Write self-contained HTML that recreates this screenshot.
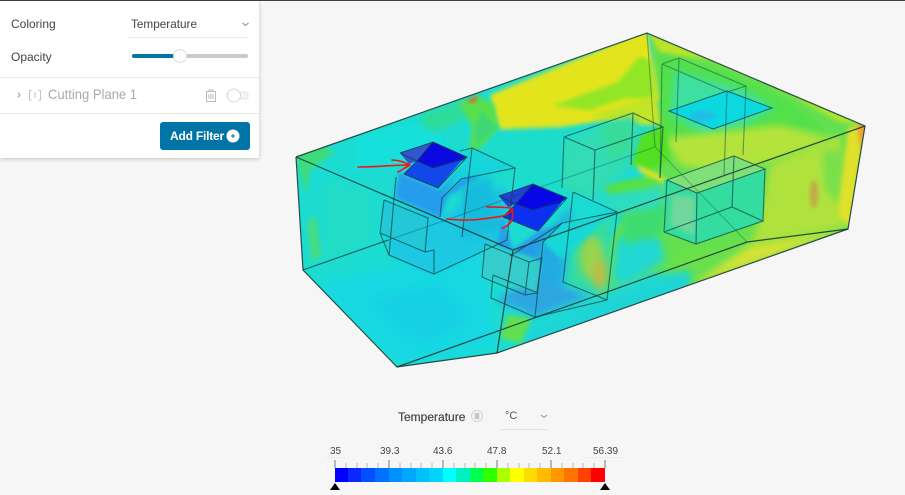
<!DOCTYPE html>
<html><head><meta charset="utf-8">
<style>
html,body{margin:0;padding:0;width:905px;height:495px;overflow:hidden;background:#f6f6f6;font-family:"Liberation Sans",sans-serif}
#wrap{position:relative;width:905px;height:495px;overflow:hidden}
#topbar{position:absolute;left:0;top:0;width:905px;height:1px;background:#3b4148}
#panel{position:absolute;left:0;top:1px;width:259px;height:157px;background:#fff;box-shadow:0 1px 4px rgba(0,0,0,.22)}
.t{position:absolute;white-space:nowrap;line-height:14px}
svg{position:absolute;left:0;top:0}
</style></head><body><div id="wrap">
<svg width="905" height="495" viewBox="0 0 905 495">
<defs>
<clipPath id="c"><polygon points="296,157 647,33 865,126 848,229 497,353 397,367 303,270"/></clipPath>
<filter id="b8" x="-30%" y="-30%" width="160%" height="160%"><feGaussianBlur stdDeviation="8"/></filter>
<filter id="b4" x="-30%" y="-30%" width="160%" height="160%"><feGaussianBlur stdDeviation="4"/></filter>
<filter id="b2" x="-30%" y="-30%" width="160%" height="160%"><feGaussianBlur stdDeviation="2"/></filter>
<filter id="s" x="-5%" y="-5%" width="110%" height="110%"><feGaussianBlur stdDeviation=".35"/></filter>
</defs>
<g clip-path="url(#c)">
<rect x="280" y="20" width="600" height="360" fill="#1cdcd2"/>
<!-- big right area green -->
<polygon points="650,20 880,110 870,240 700,300 590,330 610,240 640,190 660,120" fill="#62e050"/>
<!-- yellow top band -->
<polygon points="490,95 647,30 660,100 620,118 560,128 500,130 495,115" fill="#e4e41e" filter="url(#b2)"/>
<polygon points="552,106 585,94 618,82 640,56 652,62 655,100 625,98 590,110" fill="#92e626" filter="url(#b2)"/>
<polygon points="590,115 655,95 665,125 640,125 610,122" fill="#c4e428" filter="url(#b2)"/>
<polygon points="648,33 865,126 840,122 790,95 720,62 660,52" fill="#bfe328" filter="url(#b2)"/>
<polygon points="660,55 720,70 790,102 826,130 790,130 730,135 660,140" fill="#52e04a" filter="url(#b2)"/>
<polygon points="675,70 745,90 775,108 740,128 705,135 670,115" fill="#3ce0a0" filter="url(#b4)"/>
<polygon points="665,138 780,125 835,140 760,165 720,172 680,165" fill="#b4e43a" filter="url(#b4)"/>
<polygon points="640,135 665,125 670,160 650,170 630,165" fill="#52e020" filter="url(#b2)"/>
<polygon points="636,164 662,176 668,182 660,182 640,172" fill="#e0e028" filter="url(#b2)"/>
<polygon points="600,185 640,178 658,182 650,192 610,196" fill="#58e040" filter="url(#b2)"/>
<!-- right wall -->
<polygon points="770,165 840,135 852,225 750,245 760,220" fill="#b0e23c" filter="url(#b4)"/>
<polygon points="822,150 845,150 842,205 825,190" fill="#78e04c" filter="url(#b4)"/>
<polygon points="848,128 866,124 850,225 838,215" fill="#dfe12c" filter="url(#b2)"/>
<polygon points="857,124 867,124 861,150" fill="#ef9a30" filter="url(#b2)"/>
<ellipse cx="814" cy="194" rx="4" ry="14" fill="#c2a848" filter="url(#b2)"/>
<polygon points="750,245 848,228 760,262 690,285" fill="#d4e234" filter="url(#b4)"/>
<polygon points="680,250 747,242 700,268 650,290" fill="#6ae048" filter="url(#b4)"/>
<!-- centre cyan -->
<polygon points="490,134 560,130 610,128 632,130 628,155 600,178 560,192 520,190 470,165 475,140" fill="#1edccc" filter="url(#b4)"/>
<polygon points="565,140 632,116 640,130 630,165 595,198 562,188" fill="#30dcb4" filter="url(#b4)"/>
<polygon points="600,125 632,120 632,150 610,160" fill="#38dc9a" filter="url(#b4)"/>
<polygon points="596,198 640,190 665,185 662,215 620,215" fill="#2edcc0" filter="url(#b4)"/>
<!-- box 3 tint -->
<polygon points="664,180 765,169 763,221 696,244 664,232" fill="#34dca0"/>
<polygon points="668,180 734,156 765,169 697,193" fill="#80e078"/>
<polygon points="672,195 695,197 695,235 670,225" fill="#70d89c" filter="url(#b2)"/>
<!-- floor below right -->
<polygon points="617,240 640,225 660,240 665,260 625,285 612,280" fill="#22d8d4" filter="url(#b4)"/>
<polygon points="620,215 668,205 662,235 625,245" fill="#3cdc70" filter="url(#b4)"/>
<polygon points="605,290 650,272 690,275 640,300 590,320 570,310" fill="#22d8d0" filter="url(#b4)"/>
<!-- yellow olive between box -->
<polygon points="575,225 612,215 608,298 565,285" fill="#34dca0" filter="url(#b4)"/>
<ellipse cx="592" cy="258" rx="12" ry="22" fill="#98d44c" filter="url(#b4)"/>
<ellipse cx="600" cy="275" rx="7" ry="15" fill="#c0bc44" filter="url(#b4)"/>
<polygon points="508,315 532,318 522,344 500,338" fill="#60e050" filter="url(#b2)"/>
<polygon points="530,330 600,305 690,270 690,290 520,352" fill="#1ed4d8" filter="url(#b4)"/>
<!-- upper-left green tail -->
<polygon points="455,104 478,96 494,104 498,128 480,148 470,150 472,125" fill="#58e04c" filter="url(#b2)"/>
<polygon points="482,110 497,128 476,146 474,130" fill="#3cd874" filter="url(#b2)"/>
<polygon points="466,101 470,99 479,95 474,103" fill="#e65a20" filter="url(#b2)"/>
<polygon points="420,115 458,103 466,118 450,126 425,135" fill="#2edc98" filter="url(#b4)"/>
<!-- left wall -->
<polygon points="296,157 322,145 335,152 310,170 306,195" fill="#3edc78" filter="url(#b2)"/>
<polygon points="307,222 316,215 322,256 311,262" fill="#44dc84" filter="url(#b2)"/>
<polygon points="325,180 372,195 370,240 325,265" fill="#22dcc8" filter="url(#b4)"/>
<polygon points="320,285 480,245 496,345 400,365" fill="#14d8e2" filter="url(#b4)"/>
<polygon points="370,300 440,285 470,320 420,345" fill="#18d0e4" filter="url(#b4)"/>
<polygon points="360,135 420,125 445,142 400,165 350,170" fill="#14e0dc" filter="url(#b4)"/>
<!-- bodies -->
<polygon points="389,205 440,217 470,200 507,185 507,240 434,274 389,255" fill="#1ec8e2" filter="url(#b2)"/>
<polygon points="399,172 440,190 458,172 476,170 480,178 448,196 440,218 395,198" fill="#289cec" filter="url(#b2)"/>
<polygon points="462,186 490,176 504,230 462,238" fill="#14bcdc" filter="url(#b4)"/>
<polygon points="384,200 428,218 425,252 380,233" fill="#22c8d8"/>
<polygon points="513,250 540,230 562,224 545,243 540,262 497,246 503,218" fill="#289cea" filter="url(#b2)"/>
<polygon points="539,245 571,205 564,282 535,316 530,280" fill="#22aae2" filter="url(#b4)"/>
<polygon points="495,300 537,316 590,296 560,285 530,280" fill="#2ea6e0" filter="url(#b4)"/>
<polygon points="485,244 541,261 537,293 482,277" fill="#34cccc" filter="url(#b2)"/>
<polygon points="565,192 617,212 562,223 543,242 562,260 610,215" fill="#18d8d8" filter="url(#b2)"/>
<polygon points="470,150 515,168 461,179 442,198" fill="#14d4dc" filter="url(#b2)"/>
<!-- cyan plane -->
<polygon points="669,111 727,91 772,108 713,129" fill="#0cd8e0"/>
<ellipse cx="703" cy="116" rx="13" ry="5" fill="#20bce6" filter="url(#b2)"/>
</g>
<!-- blue planes -->
<polygon points="400,153 433,142 417,161 409,164" fill="#3256cf"/>
<polygon points="433,142 467,157 457,164 433,168 417,161" fill="#0a0ae0"/>
<polygon points="417,161 433,168 462,160 438,188 404,174" fill="#1248ea"/>
<polygon points="499,196 533,184 516,204 508,207" fill="#2040d8"/>
<polygon points="533,184 567,198 557,205 533,210 516,204" fill="#0606e6"/>
<polygon points="516,204 533,210 562,202 538,231 503,217" fill="#0c30f0"/>
<g filter="url(#s)">
<g fill="none" stroke="#123a4a" stroke-width="1" stroke-opacity=".8">
<path d="M400,153 433,142 467,157 438,188 404,174M400,153 417,161 433,168 467,157M433,142 417,161 404,174"/>
<path d="M499,196 533,184 567,198 538,231 503,217M499,196 516,204 533,210 567,198M533,184 516,204 503,217"/>
</g>
<g fill="none" stroke="#0f3f46" stroke-width="1.1" stroke-opacity=".7">
<path d="M564,137 633,113 663,127 595,150 564,137M564,137 562,188M595,150 593,200M633,113 631,165M663,127 660,178"/>
<path d="M662,64 679,58 746,86 727,92 662,64M662,64 660,178M679,58 676,142M746,86 743,155M727,92 724,175" stroke-opacity=".5"/>
<path d="M669,111 727,91 772,108 713,129Z"/>
<path d="M667,180 734,156 765,169 697,193 667,180M664,232 732,207 763,221 696,244 664,232M667,180 664,232M734,156 732,207M765,169 763,221M697,193 696,244"/>
<path d="M303,270 655,147 747,242" stroke-opacity=".3"/>
<path d="M647,33 655,147" stroke-opacity=".4"/>
<path d="M472,148 515,168 461,179 442,198 440,217M472,148 462,237M515,168 507,240 434,274M472,148 460,151M396,177 389,255 434,274 434,250 425,252"/>
<path d="M384,200 380,233 425,252 428,218 384,200M380,233 389,255"/>
<path d="M573,192 617,212 562,223 543,242 535,317 607,300 617,212M573,192 563,282 607,300M535,317 491,298 493,275"/>
<path d="M485,244 482,277 525,295 529,262 485,244M529,262 542,258 537,293 525,295M493,275 538,293"/>
<path d="M562,223 510,256M303,270 388,240"/>
</g>
<g fill="none" stroke="#1c3a38" stroke-width="1.2" stroke-opacity=".9">
<path d="M296,157 647,33 865,126 848,229 497,353 397,367 303,270 296,157"/>
<path d="M296,157 513,250 865,126M513,250 497,353M397,367 747,242 848,229"/>
</g>
</g>
<!-- red arrows -->
<g fill="none" stroke="#f01414" stroke-width="1.6" stroke-linecap="round" stroke-linejoin="round">
<path d="M358,167C375,167 395,165 410,165M392,160C400,160 406,163 410,165C406,167 402,170 398,172"/>
<path d="M447,219C470,222 490,218 503,216C508,214 511,212 513,209M487,207C496,207 504,207 510,208C514,212 513,218 511,222C508,225 505,228 502,228"/>
</g>
</svg>
<div id="topbar"></div>
<div id="panel"></div>
<svg width="905" height="495" viewBox="0 0 905 495">
<path d="M128,37.5H248M0,77.5H259M0,113.5H259" stroke="#e8e8e8" fill="none"/>
<path d="M242.5,23 245.5,25.5 248.5,23" stroke="#888" fill="none"/>
<rect x="132" y="54" width="116" height="4" rx="2" fill="#cacaca"/>
<rect x="132" y="54" width="48" height="4" rx="2" fill="#0074a6"/>
<circle cx="180" cy="56" r="6.5" fill="#fff" stroke="#dcdcdc"/>
<path d="M18,92.5 20,95 18,97.5" stroke="#aaa" stroke-width="1.2" fill="none"/>
<path d="M31.5,90.5H29.5V100H31.5M38.5,90.5H40.5V100H38.5M35,92V98" stroke="#c2c2c2" fill="none"/>
<path d="M206.5,91.5H215.5V101.5H206.5ZM209,90V91.5H213V90ZM209,94V99M211,94V99M213,94V99" stroke="#bcbcbc" fill="none"/>
<rect x="227" y="92" width="21" height="7" rx="2" fill="#f4f4f4" stroke="#e4e4e4"/>
<circle cx="234" cy="95.5" r="6.5" fill="#fff" stroke="#d8d8d8"/>
<rect x="160" y="122" width="90" height="28" rx="3" fill="#0074a6"/>
<circle cx="233" cy="136" r="6.5" fill="#fff"/>
<path d="M231,136H235M233,134V138" stroke="#0074a6"/>
<circle cx="477" cy="416" r="5.5" fill="#f4f4f4" stroke="#d4d4d4"/>
<path d="M474.7,414H479.3M474.7,416H479.3M474.7,418H479.3" stroke="#777" stroke-width=".8"/>
<path d="M500,429.5H548" stroke="#e2e2e2"/>
<path d="M541,415 544,417.5 547,415" stroke="#999" fill="none"/>
<g shape-rendering="crispEdges">
<rect x="335" y="468" width="13" height="14" fill="#0000ff"/>
<rect x="348" y="468" width="13" height="14" fill="#0a28ff"/>
<rect x="361" y="468" width="14" height="14" fill="#0050ff"/>
<rect x="375" y="468" width="14" height="14" fill="#0070ff"/>
<rect x="389" y="468" width="13" height="14" fill="#0090ff"/>
<rect x="402" y="468" width="14" height="14" fill="#00a8ff"/>
<rect x="416" y="468" width="13" height="14" fill="#00c0ff"/>
<rect x="429" y="468" width="14" height="14" fill="#00d4ff"/>
<rect x="443" y="468" width="13" height="14" fill="#00ffff"/>
<rect x="456" y="468" width="14" height="14" fill="#00f0c0"/>
<rect x="470" y="468" width="13" height="14" fill="#00ff50"/>
<rect x="483" y="468" width="14" height="14" fill="#30ff00"/>
<rect x="497" y="468" width="13" height="14" fill="#aaff00"/>
<rect x="510" y="468" width="14" height="14" fill="#ffff00"/>
<rect x="524" y="468" width="13" height="14" fill="#ffdc00"/>
<rect x="537" y="468" width="14" height="14" fill="#ffbc00"/>
<rect x="551" y="468" width="13" height="14" fill="#ff9800"/>
<rect x="564" y="468" width="14" height="14" fill="#ff7400"/>
<rect x="578" y="468" width="13" height="14" fill="#ff4000"/>
<rect x="591" y="468" width="14" height="14" fill="#ff0000"/>
</g>
<path d="M335,460V468M389,460V468M443,460V468M497,460V468M551,460V468M605,460V468" stroke="#777" stroke-width="1"/>
<path d="M346,463V468M357,463V468M367,463V468M378,463V468M400,463V468M411,463V468M421,463V468M432,463V468M454,463V468M465,463V468M475,463V468M486,463V468M508,463V468M519,463V468M529,463V468M540,463V468M562,463V468M573,463V468M583,463V468M594,463V468" stroke="#bbb"/>
<path d="M325,457.5H345M586,457.5H622" stroke="#ececec"/>
<path d="M335,483 340,490H330ZM605,483 610,490H600Z" fill="#000"/>
</svg>
<div class="t" style="left:11px;top:17px;font-size:12px;color:#444">Coloring</div>
<div class="t" style="left:131px;top:17px;font-size:12px;color:#444;transform-origin:0 50%;transform:scaleX(.98)">Temperature</div>
<div class="t" style="left:11px;top:50px;font-size:12px;color:#444">Opacity</div>
<div class="t" style="left:48px;top:87px;font-size:14px;color:#aaa;transform-origin:0 50%;transform:scaleX(.93)">Cutting Plane 1</div>
<div class="t" style="left:170px;top:129px;font-size:12px;font-weight:bold;color:#fff;letter-spacing:-.2px">Add Filter</div>
<div class="t" style="left:398px;top:410px;font-size:12px;color:#444;-webkit-text-stroke:.2px #444">Temperature</div>
<div class="t" style="left:505px;top:409px;font-size:11px;color:#555">°C</div>
<div class="t" style="left:330px;top:445px;font-size:10px;color:#444">35</div>
<div class="t" style="left:380px;top:445px;font-size:10px;color:#444">39.3</div>
<div class="t" style="left:433px;top:445px;font-size:10px;color:#444">43.6</div>
<div class="t" style="left:487px;top:445px;font-size:10px;color:#444">47.8</div>
<div class="t" style="left:542px;top:445px;font-size:10px;color:#444">52.1</div>
<div class="t" style="left:593px;top:445px;font-size:10px;color:#444">56.39</div>
</div></body></html>
